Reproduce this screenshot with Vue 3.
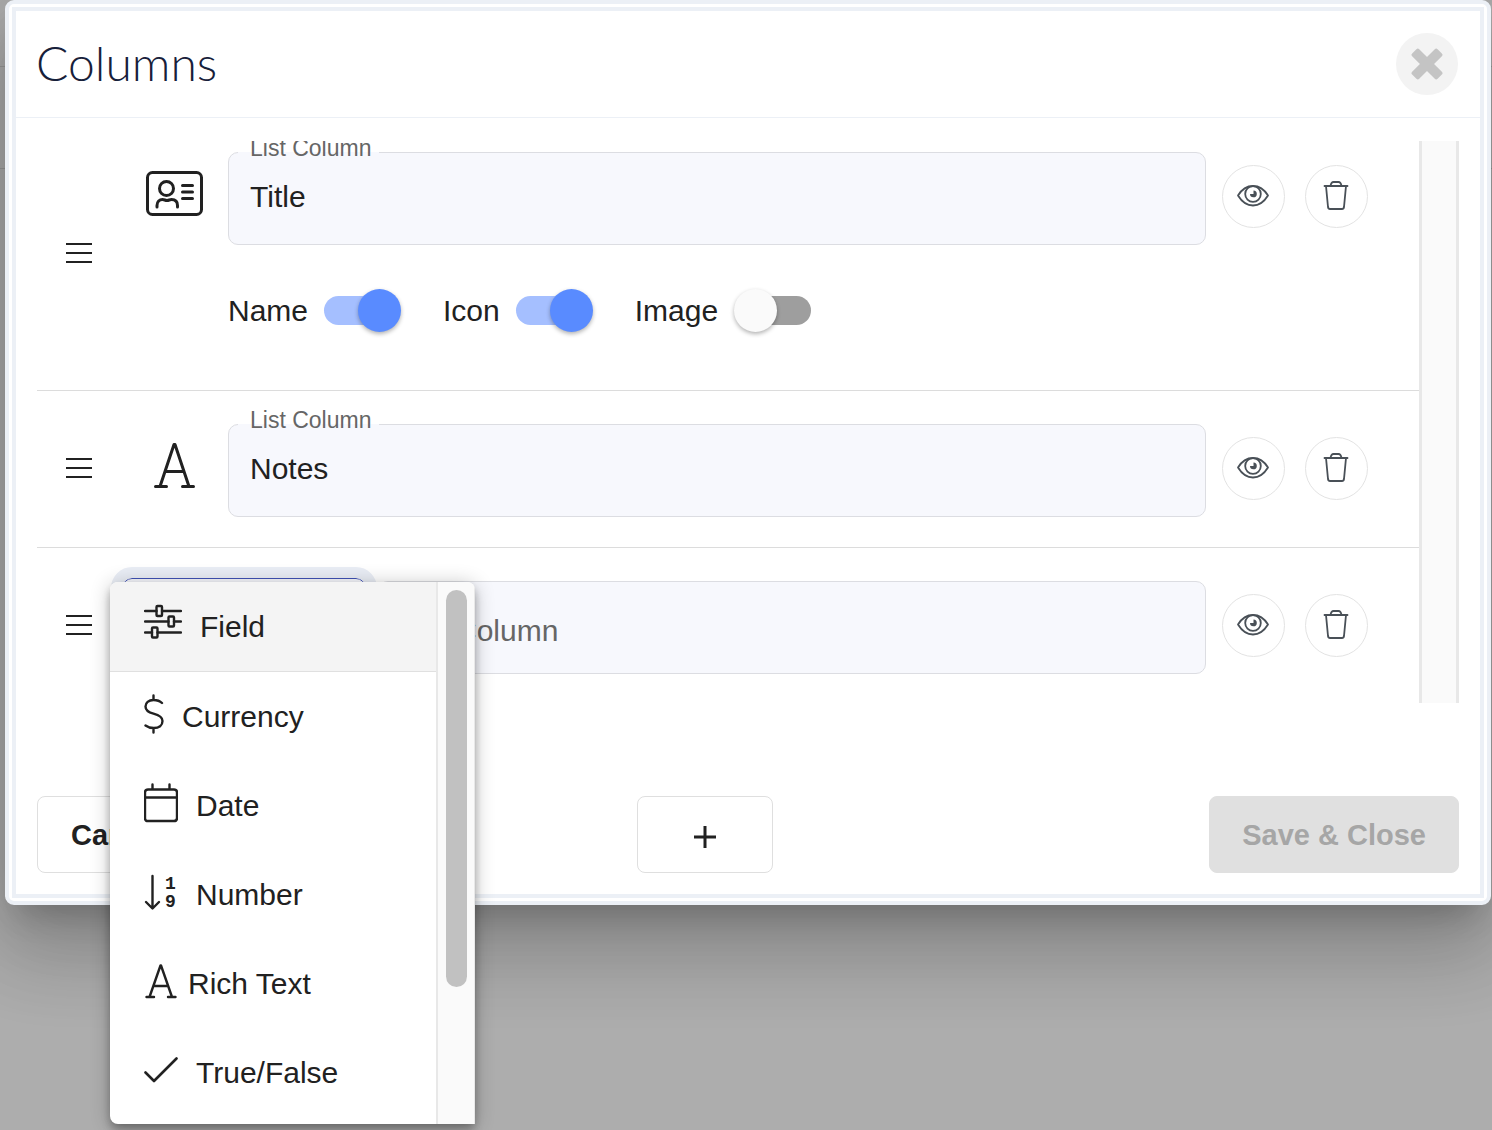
<script setup>
import { ref } from 'vue'

const rows = ref([
  { id: 1, icon: 'card', value: 'Title', toggles: [
    { name: 'Name', on: true },
    { name: 'Icon', on: true },
    { name: 'Image', on: false },
  ] },
  { id: 2, icon: 'letter', value: 'Notes', toggles: [] },
  { id: 3, icon: null, value: '', toggles: [] },
])

const fieldType = ref('Field')

const types = [
  { name: 'Field', icon: 'sliders', width: 38 },
  { name: 'Currency', icon: 'dollar', width: 20 },
  { name: 'Date', icon: 'calendar', width: 34 },
  { name: 'Number', icon: 'number', width: 34 },
  { name: 'Rich Text', icon: 'letter', width: 34 },
  { name: 'True/False', icon: 'check', width: 34 },
]
</script>

<template>
  <div class="page">
    <section class="dialog" role="dialog" aria-labelledby="dialog-title">
      <div class="panel">
        <header class="header">
          <h1 id="dialog-title">Columns</h1>
          <button class="close" type="button" aria-label="Close">
            <svg width="32" height="32" viewBox="0 0 32 32">
              <g fill="#c4c4c4">
                <rect x="-2" y="11" width="36" height="10" rx="2" transform="rotate(45 16 16)" />
                <rect x="-2" y="11" width="36" height="10" rx="2" transform="rotate(-45 16 16)" />
              </g>
            </svg>
          </button>
        </header>

        <div class="viewport">
          <ul class="rows">
            <li v-for="row in rows" :key="row.id" class="row">
              <button class="handle" type="button" aria-label="Reorder">
                <svg width="26" height="22" viewBox="0 0 26 22" stroke="#212121" stroke-width="2">
                  <path d="M0 2H26M0 11H26M0 20H26" />
                </svg>
              </button>
              <div class="content">
                <div class="line">
                  <div v-if="row.icon" class="kind">
                    <svg v-if="row.icon === 'card'" width="58" height="46" viewBox="0 0 58 46" fill="none" stroke="#212121" stroke-width="3" stroke-linecap="round">
                      <rect x="1.500" y="2.500" width="54" height="42" rx="5" />
                      <circle cx="20.500" cy="18.500" r="7" />
                      <path d="M11 37V35.500C11 31.500 13.500 29.500 16.500 29.500C18.500 29.500 19 30.500 21 30.500S23.500 29.500 25.500 29.500C29 29.500 31.500 31.500 31.500 35.500V37" />
                      <path d="M36.500 15.500H46.500M36.500 22H46.500M36.500 28.500H46.500" />
                    </svg>
                    <svg v-else width="42" height="46" viewBox="0 0 42 46" fill="none" stroke="#212121" stroke-width="3" stroke-linecap="round" stroke-linejoin="round">
                      <path d="M6 44.500L20 2.500H21L35 44.500M11 29.500H30M1.500 44.500H12.500M28.500 44.500H39.500" />
                    </svg>
                  </div>
                  <div v-else class="picker">
                    <select v-model="fieldType" aria-label="Column type">
                      <option v-for="type in types" :key="type.name">{{ type.name }}</option>
                    </select>
                  </div>

                  <div class="field">
                    <label v-if="row.value" :for="'column-' + row.id">List Column</label>
                    <input
                      :id="'column-' + row.id"
                      v-model="row.value"
                      type="text"
                      placeholder="List Column"
                      aria-label="List Column"
                    />
                  </div>

                  <div class="actions">
                    <button class="round" type="button" aria-label="Show column">
                      <svg width="34" height="30" viewBox="0 0 34 30" fill="none" stroke="#495057" stroke-width="1.800" stroke-linejoin="round">
                        <path d="M2 14.500C6 8 11 5 17 5S28 8 32 14.500C28 21 23 24.500 17 24.500S6 21 2 14.500Z" />
                        <circle cx="17" cy="13" r="7.800" />
                        <path d="M17.500 9.500V13H14A3.400 3.400 0 1 0 17.500 9.500Z" fill="#495057" stroke="none" />
                      </svg>
                    </button>
                    <button class="round" type="button" aria-label="Delete column">
                      <svg width="26" height="32" viewBox="0 0 26 32" fill="none" stroke="#495057" stroke-width="1.800" stroke-linecap="round" stroke-linejoin="round">
                        <path d="M1.500 6H24.500M7.500 6C8 3 9 2 10.500 2H15.500C17 2 18 3 18.500 6M3 6L5 27C5.200 28.400 5.800 29 7 29H19C20.200 29 20.800 28.400 21 27L23 6" />
                      </svg>
                    </button>
                  </div>
                </div>

                <div v-if="row.toggles.length" class="toggles">
                  <label v-for="toggle in row.toggles" :key="toggle.name">
                    {{ toggle.name }}
                    <input v-model="toggle.on" type="checkbox" role="switch" />
                  </label>
                </div>
              </div>
            </li>
          </ul>
          <div class="track"></div>
        </div>

        <footer class="footer">
          <button class="btn" type="button">Cancel</button>
          <button class="btn add" type="button" aria-label="Add column">
            <svg width="22" height="22" viewBox="0 0 22 22" stroke="#212121" stroke-width="3">
              <path d="M0 11H22M11 0V22" />
            </svg>
          </button>
          <button class="btn save" type="button" disabled>Save &amp; Close</button>
        </footer>
      </div>
    </section>

    <div class="menu">
      <ul class="options" role="listbox" aria-label="Column type">
        <li v-for="type in types" :key="type.name" role="option" :aria-selected="type.name === fieldType" :class="['option', type.icon]">
          <svg :width="type.width" height="40" :viewBox="`0 0 ${type.width} 40`" fill="none" stroke="#212121" stroke-width="2.400" stroke-linecap="round" stroke-linejoin="round">
            <template v-if="type.icon === 'sliders'">
              <path d="M1 7H12.500M18 7H37M1 17.500H24.500M30 17.500H37M1 28.500H8M13.500 28.500H37" />
              <rect x="12.500" y="2" width="5.500" height="10" rx="1" />
              <rect x="24.500" y="12.500" width="5.500" height="10" rx="1" />
              <rect x="8" y="23.500" width="5.500" height="10" rx="1" />
            </template>
            <path v-else-if="type.icon === 'dollar'" d="M9.500 1.500V6M9.500 34V38.500M18 9C15.500 6.500 12.500 6 9.500 6C4.500 6 1.500 8.800 1.500 12.500C1.500 17 5 18.500 9.500 19.700C14.500 21 18.500 22.500 18.500 27C18.500 31.500 15 34 9.800 34C6 34 3.500 33 1.500 31.500" />
            <path v-else-if="type.icon === 'calendar'" d="M4 6.500H30Q33 6.500 33 9.500V35Q33 38 30 38H4Q1 38 1 35V9.500Q1 6.500 4 6.500ZM1 14.500H33M8.500 1.500V6.500M25.500 1.500V6.500" />
            <template v-else-if="type.icon === 'number'">
              <path d="M8.500 4V36M2 30L8.500 36.500L15 30" />
              <text fill="#212121" stroke="none"><tspan x="21" y="17">1</tspan><tspan x="21" y="35">9</tspan></text>
            </template>
            <path v-else-if="type.icon === 'letter'" d="M5.500 36L16.500 4.500H17L28 36M9.500 25H24M2.500 36H10M24 36H31.500" />
            <path v-else d="M1.500 22.500L10 31L32.500 8.500" stroke-width="2.600" />
          </svg>
          <span>{{ type.name }}</span>
        </li>
      </ul>
      <div class="menu-track"><div class="thumb"></div></div>
    </div>
  </div>
</template>

<style>
body {
  margin: 0;
  background: #adadad;
}
</style>

<style scoped>
.page {
  position: relative;
  box-sizing: border-box;
  min-height: 100vh;
  padding: 0 1px 0 5px;
  overflow: hidden;
  background:
    linear-gradient(#999, #999) 0 66px / 100% 1px no-repeat,
    linear-gradient(#999, #999) 0 168px / 100% 1px no-repeat,
    #adadad;
  color: #212121;
  font: 30px/36px "Liberation Sans", Arial, sans-serif;
}

button,
input,
select {
  box-sizing: border-box;
  margin: 0;
  color: inherit;
  font: inherit;
}

ul {
  margin: 0;
  padding: 0;
  list-style: none;
}

svg {
  display: block;
}

.dialog {
  padding: 3px;
  border: 4px solid #ecf0f6;
  border-radius: 9px;
  background: #fff;
  box-shadow:
    0 22px 30px -14px rgba(0, 0, 0, 0.2),
    0 48px 76px 6px rgba(0, 0, 0, 0.14),
    0 18px 92px 16px rgba(0, 0, 0, 0.12);
}

.panel {
  border: 4px solid #ecf0f6;
}

.header {
  display: flex;
  align-items: center;
  justify-content: space-between;
  height: 106px;
  padding: 0 22px 0 20px;
  border-bottom: 1px solid #ecf0f6;
}

h1 {
  margin: 0;
  padding-bottom: 2px;
  color: #17203a;
  font: 300 48px/60px Lato, sans-serif;
}

.close {
  display: grid;
  place-items: center;
  width: 62px;
  height: 62px;
  padding: 0;
  border: 0;
  border-radius: 50%;
  background: #f3f3f3;
}

.viewport {
  display: flex;
  height: 562px;
  margin: 23px 21px 0;
  overflow: hidden;
}

.rows {
  flex: 1;
  margin-top: -22px;
}

.row {
  display: flex;
  align-items: center;
  padding-top: 33px;
  border-bottom: 1px solid #dcdcdc;
}

.row:last-child {
  border-bottom: 0;
}

.handle {
  display: grid;
  place-items: center;
  width: 84px;
  padding: 0 0 36px;
  border: 0;
  background: none;
}

.content {
  flex: 1;
  padding-bottom: 30px;
}

.line {
  display: flex;
  align-items: flex-start;
}

.kind {
  display: grid;
  place-items: center;
  width: 107px;
  height: 82px;
}

.picker {
  width: 257px;
}

.picker select {
  display: block;
  width: 244px;
  height: 97px;
  margin: -3px 0 0 1px;
  padding: 0 22px;
  border: 1px solid #3f51b5;
  border-radius: 10px;
  outline: 11px solid #e9edf5;
  background: #f7f8fd;
  appearance: none;
}

.field {
  position: relative;
  flex: 1;
}

.field input {
  display: block;
  width: 100%;
  height: 93px;
  padding: 0 21px 4px;
  border: 1px solid #dcdde2;
  border-radius: 10px;
  outline: 0;
  background: #f7f8fd;
}

.field input::placeholder {
  color: #666;
  opacity: 1;
}

.field input:placeholder-shown {
  padding: 6px 21px 0;
}

.field label {
  position: absolute;
  top: -17px;
  left: 10px;
  padding: 0 8px 0 12px;
  background: linear-gradient(transparent 17px, #f7f8fd 17px);
  color: #666;
  font-size: 23px;
  line-height: 26px;
}

.actions {
  display: flex;
  gap: 20px;
  padding: 13px 51px 0 16px;
}

.round {
  display: grid;
  place-items: center;
  width: 63px;
  height: 63px;
  padding: 0 2px 2px 0;
  border: 1px solid #e3e3e3;
  border-radius: 50%;
  background: #fff;
}

.toggles {
  display: flex;
  gap: 42px;
  padding: 44px 0 28px 107px;
}

.toggles label {
  display: flex;
  align-items: center;
  gap: 16px;
}

.toggles input {
  position: relative;
  display: flex;
  align-items: center;
  width: 77px;
  height: 43px;
  appearance: none;
}

.toggles input::before {
  content: "";
  width: 75px;
  height: 29px;
  margin-left: 2px;
  border-radius: 15px;
  background: #9e9e9e;
}

.toggles input::after {
  content: "";
  position: absolute;
  left: 0;
  width: 43px;
  height: 43px;
  border-radius: 50%;
  background: #fafafa;
  box-shadow: 0 2px 4px rgba(0, 0, 0, 0.3);
}

.toggles input:checked::before {
  margin-left: 0;
  background: #a5bfff;
}

.toggles input:checked::after {
  right: 0;
  left: auto;
  background: #598bff;
}

.track {
  box-sizing: border-box;
  width: 40px;
  border: solid #e8e8e8;
  border-width: 0 3px;
  background: #fafafa;
}

.footer {
  display: flex;
  justify-content: space-between;
  padding: 93px 21px 21px;
}

.btn {
  height: 77px;
  padding: 0 33px;
  border: 1px solid #dfdfdf;
  border-radius: 8px;
  background: #fff;
  font-size: 29px;
  font-weight: bold;
}

.add {
  display: grid;
  place-items: center;
  width: 136px;
  padding: 4px 0 0;
}

.save {
  padding: 0 32px;
  border-color: #e0e0e0;
  background: #e0e0e0;
  color: #a6a6a6;
}

.menu {
  position: absolute;
  top: 582px;
  left: 110px;
  display: flex;
  width: 365px;
  overflow: hidden;
  border-radius: 8px 8px 0 8px;
  background: #fff;
  box-shadow:
    0 4px 8px -2px rgba(0, 0, 0, 0.2),
    0 8px 10px rgba(0, 0, 0, 0.14),
    0 2px 20px rgba(0, 0, 0, 0.24);
}

.options {
  flex: 1;
  padding-bottom: 7px;
}

.option {
  display: flex;
  align-items: center;
  gap: 18px;
  height: 89px;
  padding-left: 34px;
}

.option[aria-selected="true"] {
  border-bottom: 1px solid #e0e0e0;
  background: #f4f4f4;
}

.option svg {
  margin-bottom: 5px;
}

.option text {
  font: bold 18px "Liberation Mono", monospace;
}

.option.letter {
  gap: 10px;
}

.menu-track {
  box-sizing: border-box;
  width: 39px;
  padding: 8px 8px 0;
  border: solid #e8e8e8;
  border-width: 0 1px 0 2px;
  background: #fafafa;
}

.thumb {
  width: 21px;
  height: 397px;
  border-radius: 11px;
  background: #c1c1c1;
}
</style>
